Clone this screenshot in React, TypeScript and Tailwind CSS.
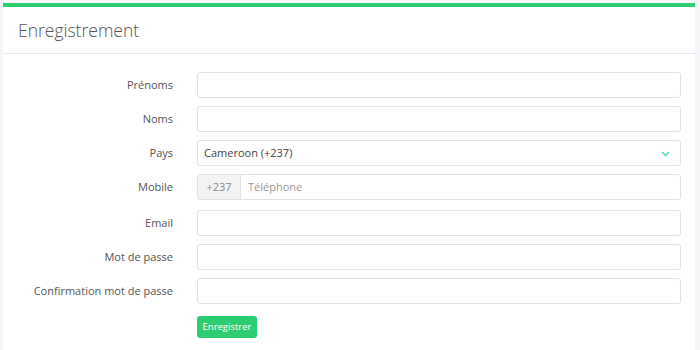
import React from "react";

const font = { fontFamily: '"Open Sans", "Liberation Sans", sans-serif' };

function Row({ label, children, mb = "mb-[8px]" }: { label: string; children: React.ReactNode; mb?: string }) {
  return (
    <div className={`flex items-center ${mb}`}>
      <div className="w-[170px] shrink-0 text-right text-[11px] text-[#555]">{label}</div>
      <div className="ml-[24px] flex-1">{children}</div>
    </div>
  );
}

const inputCls =
  "block w-full h-[26px] rounded-[3px] border border-[#e2e2e2] bg-white px-[6px] text-[11px] text-[#555] outline-none";

export default function App() {
  return (
    <div style={font} className="w-[700px] h-[350px] overflow-hidden bg-[#f4f6f9] pt-[3px] pl-[3px] pr-[5px]">
      <div className="bg-white border-t-[4px] border-[#2ecc71] h-[400px]">
        <div className="h-[47px] border-b border-[#e4e8ec] flex items-center pl-[15px]">
          <h1 className="text-[17.5px] font-light text-[#555]">Enregistrement</h1>
        </div>
        <div className="pt-[18px] pr-[14px]">
          <Row label="Prénoms">
            <input className={inputCls} />
          </Row>
          <Row label="Noms">
            <input className={inputCls} />
          </Row>
          <Row label="Pays">
            <div className="relative h-[26px] rounded-[3px] border border-[#e2e2e2] bg-white flex items-center px-[6px]">
              <span className="text-[11px] text-[#444]">Cameroon (+237)</span>
              <svg className="absolute right-[10px] top-[10px]" width="9" height="6" viewBox="0 0 9 6">
                <path d="M1 1 L4.5 4.5 L8 1" fill="none" stroke="#3dd6ae" strokeWidth="1.4" />
              </svg>
            </div>
          </Row>
          <Row label="Mobile" mb="mb-[10px]">
            <div className="flex h-[26px] rounded-[3px] border border-[#e2e2e2] bg-white overflow-hidden">
              <div className="w-[43px] shrink-0 bg-[#f3f3f3] border-r border-[#e2e2e2] flex items-center justify-center text-[11px] text-[#888]">
                +237
              </div>
              <input
                placeholder="Téléphone"
                className="flex-1 px-[7px] text-[11px] text-[#555] placeholder:text-[#999] outline-none"
              />
            </div>
          </Row>
          <Row label="Email">
            <input className={inputCls} />
          </Row>
          <Row label="Mot de passe">
            <input className={inputCls} />
          </Row>
          <Row label="Confirmation mot de passe" mb="mb-[8px]">
            <input className={inputCls} />
          </Row>
          <div className="flex">
            <div className="w-[170px] shrink-0" />
            <div className="ml-[24px]">
              <button className="h-[22px] w-[60px] rounded-[3px] bg-[#2ecc71] text-white text-[9.5px]">
                Enregistrer
              </button>
            </div>
          </div>
        </div>
      </div>
    </div>
  );
}
